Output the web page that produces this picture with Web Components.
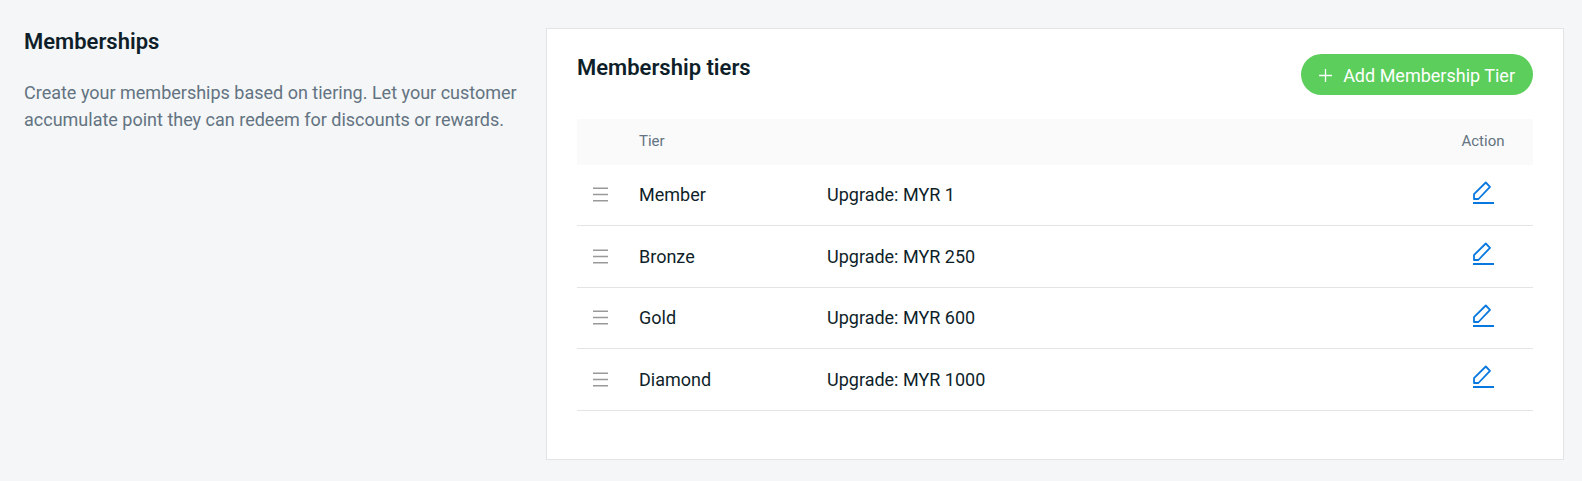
<!DOCTYPE html>
<html lang="en">
<head>
<meta charset="utf-8">
<title>Memberships</title>
<style>
  body {
    margin: 0;
    background: #f4f6f8;
    color: #0f1f2a;
    font: 18px/27px Roboto, "Liberation Sans", sans-serif;
  }
</style>
</head>
<body>
<membership-page>
  <section-intro slot="intro" heading="Memberships">Create your memberships based on tiering. Let your customer accumulate point they can redeem for discounts or rewards.</section-intro>
  <tier-card heading="Membership tiers">
    <add-button slot="action">Add Membership Tier</add-button>
    <tier-table></tier-table>
  </tier-card>
</membership-page>

<script>
  class BaseElement extends HTMLElement {
    render(html) {
      this.attachShadow({ mode: "open" }).innerHTML = html;
    }
  }

  customElements.define("membership-page", class extends BaseElement {
    connectedCallback() {
      this.render(`
        <style>
          :host { display: block; }
          main {
            display: grid;
            grid-template-columns: minmax(0, 1fr) minmax(0, 2fr);
            gap: 13px;
            padding: 28px 18px 21px 24px;
          }
        </style>
        <main><slot name="intro"></slot><slot></slot></main>`);
    }
  });

  customElements.define("section-intro", class extends BaseElement {
    connectedCallback() {
      this.render(`
        <style>
          :host { display: block; }
          h1 { margin: 0 0 23px; font-size: 22px; line-height: 28px; font-weight: 600; }
          p { margin: 0; color: #637381; }
        </style>
        <h1>${this.getAttribute("heading")}</h1>
        <p><slot></slot></p>`);
    }
  });

  customElements.define("tier-card", class extends BaseElement {
    connectedCallback() {
      this.render(`
        <style>
          :host { display: block; }
          section {
            background: #fff;
            border: 1px solid #e3e4e5;
            padding: 25px 30px 48px;
          }
          header {
            display: flex;
            justify-content: space-between;
            align-items: flex-start;
            margin-bottom: 24px;
          }
          h2 { margin: 0; font-size: 22px; line-height: 28px; font-weight: 600; }
        </style>
        <section>
          <header><h2>${this.getAttribute("heading")}</h2><slot name="action"></slot></header>
          <slot></slot>
        </section>`);
    }
  });

  customElements.define("add-button", class extends BaseElement {
    connectedCallback() {
      this.render(`
        <style>
          :host { display: block; }
          button {
            display: flex;
            align-items: center;
            gap: 11px;
            height: 41px;
            padding: 2px 18px 0;
            border: 0;
            border-radius: 21px;
            background: #5bce5b;
            color: #fff;
            font: inherit;
            cursor: pointer;
          }
          svg { display: block; }
        </style>
        <button type="button">
          <svg width="13" height="13" viewBox="0 0 13 13" aria-hidden="true"><path d="M6.5 0v13M0 6.5h13" stroke="#fff" stroke-width="1.3"/></svg>
          <span><slot></slot></span>
        </button>`);
    }
  });

  customElements.define("drag-handle", class extends BaseElement {
    connectedCallback() {
      this.render(`
        <style>
          :host { display: block; cursor: move; }
          svg { display: block; }
        </style>
        <svg width="15" height="15" viewBox="0 0 15 15" aria-hidden="true"><path d="M0 1.2h15M0 7.5h15M0 13.8h15" stroke="#999" stroke-width="1.4"/></svg>`);
    }
  });

  customElements.define("edit-button", class extends BaseElement {
    connectedCallback() {
      this.render(`
        <style>
          :host { display: block; }
          button { display: block; margin: 0 auto; padding: 0; border: 0; background: none; cursor: pointer; }
          svg { display: block; }
        </style>
        <button type="button" aria-label="Edit ${this.getAttribute("tier")}">
          <svg width="21" height="24" viewBox="0 0 21 24" fill="none" stroke="#0878df" stroke-width="1.8" aria-hidden="true">
            <path d="M1 18V13.2L12.8 1.5L17 5.8L5.4 18Z" stroke-linejoin="round"/>
            <path d="M0 22h21" stroke-width="2"/>
          </svg>
        </button>`);
    }
  });

  customElements.define("tier-table", class extends BaseElement {
    connectedCallback() {
      const tiers = [["Member", 1], ["Bronze", 250], ["Gold", 600], ["Diamond", 1000]];
      const rows = tiers.map(([name, amount]) => `
        <tr>
          <td><drag-handle></drag-handle></td>
          <td>${name}</td>
          <td>Upgrade: MYR ${amount}</td>
          <td><edit-button tier="${name}"></edit-button></td>
        </tr>`).join("");
      this.render(`
        <style>
          :host { display: block; }
          table { width: 100%; table-layout: fixed; border-collapse: separate; border-spacing: 0; }
          .handle { width: 46px; }
          .tier { width: 188px; }
          .action { width: 100px; }
          th, td { box-sizing: border-box; padding: 0 16px; text-align: left; vertical-align: middle; }
          th { height: 46px; padding-bottom: 3px; background: #fafafa; color: #637381; font-size: 15px; line-height: 20px; font-weight: 400; }
          th:first-child { border-top-left-radius: 2px; }
          th:last-child { border-top-right-radius: 2px; text-align: center; }
          td { height: 61px; padding-bottom: 1px; border-bottom: 1px solid #e3e4e5; }
          tr:nth-child(even) td { height: 62px; }
          tr td:last-child { padding-bottom: 5px; }
        </style>
        <table>
          <colgroup><col class="handle"><col class="tier"><col><col class="action"></colgroup>
          <thead><tr><th></th><th scope="col">Tier</th><th></th><th scope="col">Action</th></tr></thead>
          <tbody>${rows}</tbody>
        </table>`);
    }
  });
</script>
</body>
</html>
